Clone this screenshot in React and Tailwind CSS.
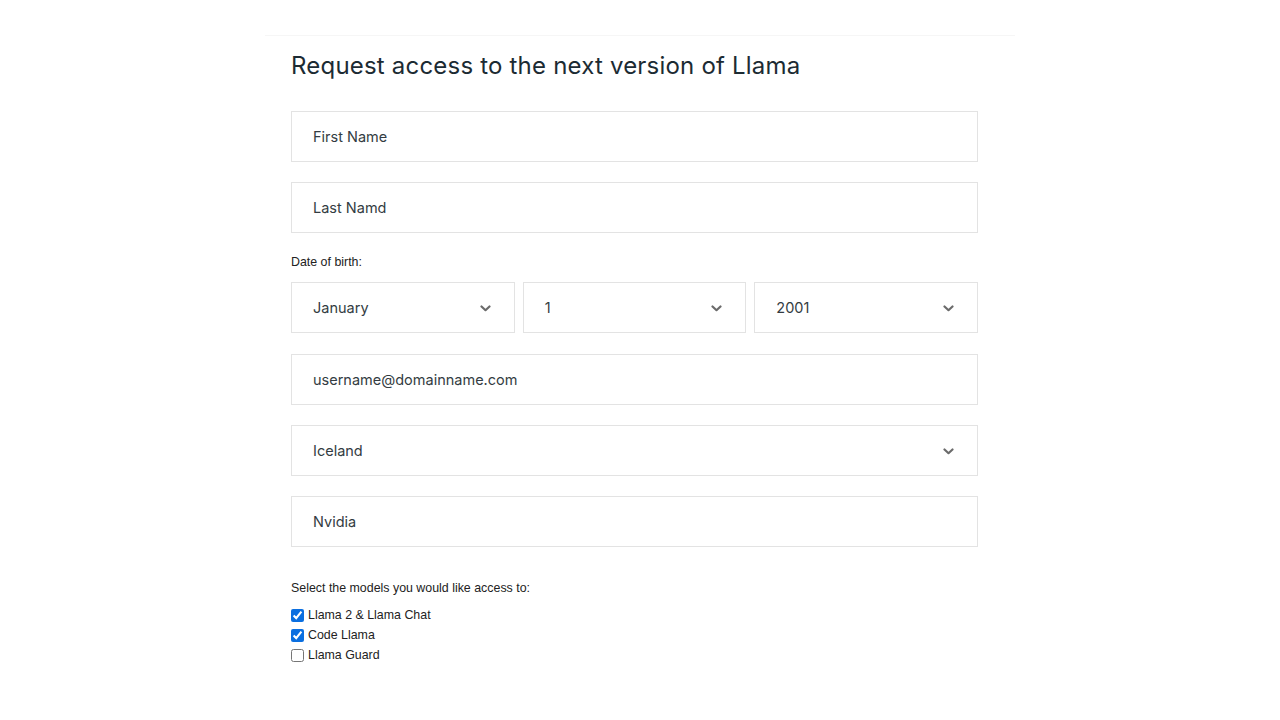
import React from 'react';

// Small chevron used on select boxes
const Chevron = () => (
    <svg width="11" height="7" viewBox="0 0 11 7" className="shrink-0">
        <path d="M1.5 1.5 L5.5 5.2 L9.5 1.5" fill="none" stroke="#6b6b6b" strokeWidth="2.2" strokeLinecap="round" strokeLinejoin="round" />
    </svg>
);

const Field = ({ value }) => (
    <div className="h-[51px] border border-[#e3e3e3] bg-white flex items-center pl-[21px] pt-[1px] text-[14.5px] text-[#333c42]">
        {value}
    </div>
);

const Select = ({ value, className = "" }) => (
    <div className={`h-[51px] border border-[#e3e3e3] bg-white flex items-center justify-between pl-[21px] pr-[23px] pt-[2px] text-[14.5px] text-[#333c42] ${className}`}>
        <span>{value}</span>
        <Chevron />
    </div>
);

const Check = ({ checked, label }) => (
    <label className="flex items-center h-[20px] gap-[4px] text-[12.4px] text-[#222]" style={{ fontFamily: '"Liberation Sans", Arial, sans-serif' }}>
        <input type="checkbox" defaultChecked={checked} className="w-[13px] h-[13px] m-0 accent-[#0b6fe0]" />
        <span>{label}</span>
    </label>
);

const App = () => {
    return (
        <div className="min-h-screen bg-white" style={{ fontFamily: 'Inter, "Noto Sans", sans-serif' }}>
            <div className="w-[750px] ml-[265px] pt-[35px]">
                <div className="border-t border-[#f6f6f6]" />
                <div className="pl-[26px] w-[713px]">
                    <h1 className="text-[24px] leading-[30px] mt-[15px] text-[#1c2b33] tracking-[0.2px]">
                        Request access to the next version of Llama
                    </h1>

                    <div className="mt-[30px] flex flex-col gap-[20px]">
                        <Field value="First Name" />
                        <Field value="Last Namd" />
                    </div>

                    <div className="mt-[20px] text-[12.4px] text-[#222]" style={{ fontFamily: '"Liberation Sans", Arial, sans-serif' }}>
                        Date of birth:
                    </div>
                    <div className="mt-[10px] flex gap-[8px]">
                        <Select value="January" className="flex-1" />
                        <Select value="1" className="flex-1" />
                        <Select value="2001" className="flex-1" />
                    </div>

                    <div className="mt-[21px] flex flex-col gap-[20px]">
                        <Field value="username@domainname.com" />
                        <Select value="Iceland" />
                        <Field value="Nvidia" />
                    </div>

                    <div className="mt-[32px] text-[12.4px] text-[#222]" style={{ fontFamily: '"Liberation Sans", Arial, sans-serif' }}>
                        Select the models you would like access to:
                    </div>
                    <div className="mt-[8px] flex flex-col">
                        <Check checked label="Llama 2 & Llama Chat" />
                        <Check checked label="Code Llama" />
                        <Check checked={false} label="Llama Guard" />
                    </div>
                </div>
            </div>
        </div>
    );
};

export default App;
